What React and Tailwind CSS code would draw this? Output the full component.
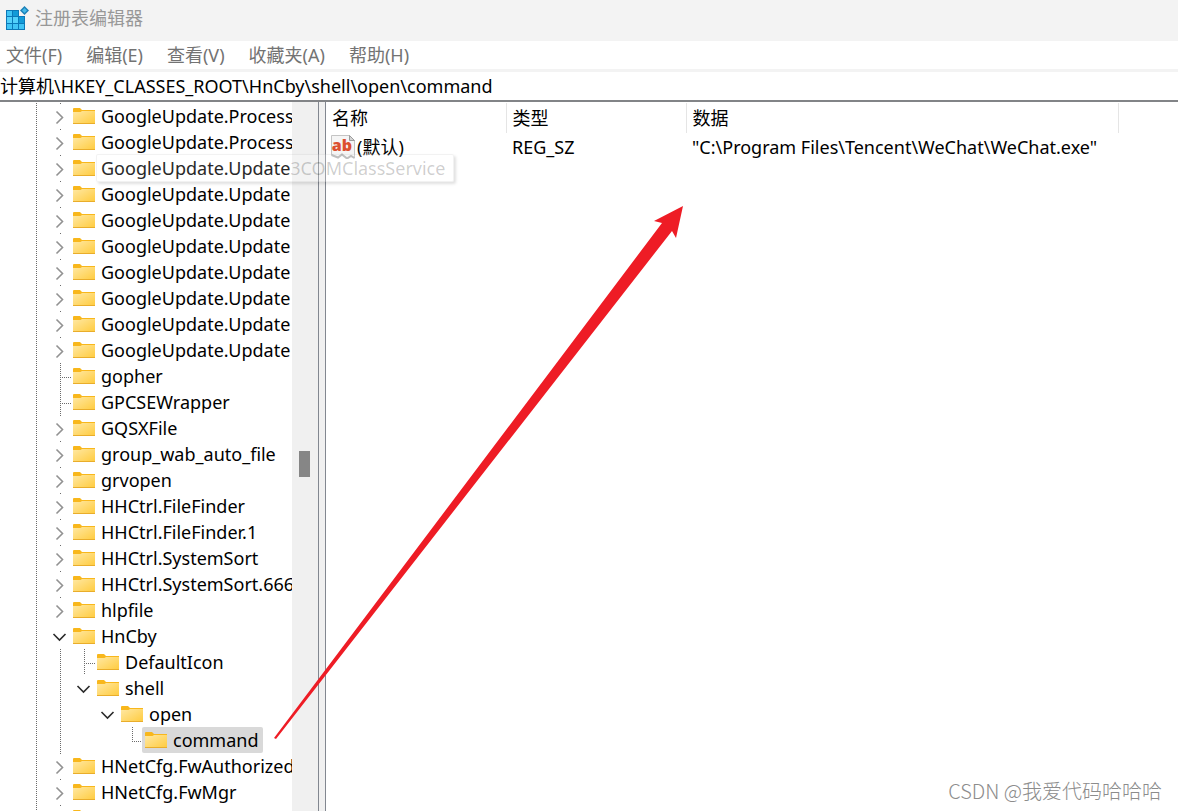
import React, { useState } from 'react';

const menus = ['文件(F)', '编辑(E)', '查看(V)', '收藏夹(A)', '帮助(H)'];

// guides: one entry per 24px indent column, left to right
const keys = [
  { name: 'GoogleUpdate.Process', guides: ['line', 'closed'] },
  { name: 'GoogleUpdate.Process', guides: ['line', 'closed'] },
  { name: 'GoogleUpdate.Update', guides: ['line', 'closed'] },
  { name: 'GoogleUpdate.Update', guides: ['line', 'closed'] },
  { name: 'GoogleUpdate.Update', guides: ['line', 'closed'] },
  { name: 'GoogleUpdate.Update', guides: ['line', 'closed'] },
  { name: 'GoogleUpdate.Update', guides: ['line', 'closed'] },
  { name: 'GoogleUpdate.Update', guides: ['line', 'closed'] },
  { name: 'GoogleUpdate.Update', guides: ['line', 'closed'] },
  { name: 'GoogleUpdate.Update', guides: ['line', 'closed'] },
  { name: 'gopher', guides: ['line', 'tee'] },
  { name: 'GPCSEWrapper', guides: ['line', 'tee'] },
  { name: 'GQSXFile', guides: ['line', 'closed'] },
  { name: 'group_wab_auto_file', guides: ['line', 'closed'] },
  { name: 'grvopen', guides: ['line', 'closed'] },
  { name: 'HHCtrl.FileFinder', guides: ['line', 'closed'] },
  { name: 'HHCtrl.FileFinder.1', guides: ['line', 'closed'] },
  { name: 'HHCtrl.SystemSort', guides: ['line', 'closed'] },
  { name: 'HHCtrl.SystemSort.666', guides: ['line', 'closed'] },
  { name: 'hlpfile', guides: ['line', 'closed'] },
  { name: 'HnCby', guides: ['line', 'open'] },
  { name: 'DefaultIcon', guides: ['line', 'line', 'tee'] },
  { name: 'shell', guides: ['line', 'line', 'open'] },
  { name: 'open', guides: ['line', 'line', 'blank', 'open'] },
  { name: 'command', guides: ['line', 'line', 'blank', 'blank', 'elbow'] },
  { name: 'HNetCfg.FwAuthorized', guides: ['line', 'closed'] },
  { name: 'HNetCfg.FwMgr', guides: ['line', 'closed'] },
  { name: '', guides: ['line', 'closed'] },
];

const Guide = ({ type }) => (
  <svg width="24" height="26" viewBox="0 0 24 26" className="shrink-0" fill="none" aria-hidden="true">
    <g stroke="#6b6b6b" strokeDasharray="1 1" shapeRendering="crispEdges">
      {(type === 'line' || type === 'tee') && <path d="M12.5 0V26" />}
      {type === 'elbow' && <path d="M12.5 0V14" />}
      {(type === 'tee' || type === 'elbow') && <path d="M12 14.5H23" />}
      {type === 'closed' && <path d="M12.5 0V1" />}
    </g>
    {type === 'closed' && <path d="M8.5 8.5L14.5 14.5L8.5 20.5" stroke="#929292" strokeWidth="1.6" />}
    {type === 'open' && <path d="M5.5 11L11.5 17L17.5 11" stroke="#2b2b2b" strokeWidth="1.6" />}
  </svg>
);

const FolderIcon = () => (
  <svg width="22" height="17" viewBox="0 0 22 17" className="shrink-0" aria-hidden="true">
    <defs>
      <linearGradient id="folder" x1="0" y1="0" x2="1" y2="1">
        <stop offset="0" stopColor="#ffe8a3" />
        <stop offset="1" stopColor="#ffcb3d" />
      </linearGradient>
    </defs>
    <path d="M0 1Q0 0 1 0H7L9 2H22V5H0Z" fill="#f8b71c" />
    <path d="M0 4H7.5L9 3H22V16H0Z" fill="url(#folder)" />
    <path d="M0 15.5H22" stroke="#e9ad2b" />
  </svg>
);

const RegeditIcon = () => (
  <svg width="24" height="24" viewBox="0 0 24 24" aria-hidden="true">
    <path d="M1 4H14V10H20V24H1Z" fill="#0b78b8" />
    <path d="M2 5H7V10H2ZM8 18H13V23H8ZM2 18H7V23H2ZM14 18H19V23H14Z" fill="#40c4f5" />
    <path d="M2 11H7V17H2ZM8 11H13V17H8Z" fill="#52d0fa" />
    <path d="M8 5H13V10H8ZM14 11H19V17H14Z" fill="#129ad8" />
    <path d="M19.5 0L24 4.5L19.5 9L15 4.5Z" fill="#1b80b8" />
    <path d="M19.5 2L22 4.5L19.5 7L17 4.5Z" fill="#45b9e8" />
  </svg>
);

const StringIcon = () => (
  <svg width="24" height="24" viewBox="0 0 24 24" className="shrink-0" aria-hidden="true">
    <path d="M.5 .5H18.5L23.5 5.5V23L20 21L16 23.5L11 19.5L7 22.5L.5 20Z" fill="#f5f5f5" stroke="#c4c4c4" />
    <path d="M18.5 .5V5.5H23.5Z" fill="#d4d4d4" stroke="#9c9c9c" />
    <path d="M.5 20L7 22.5L11 19.5L16 23.5L20 21L23.5 23" fill="none" stroke="#b0b0b0" strokeWidth="2" />
    <text x="11" y="16" textAnchor="middle" fontSize="16" fontWeight="800" fontFamily="Open Sans, sans-serif" fill="#dc5030">ab</text>
  </svg>
);

const Tree = () => {
  const [selected, setSelected] = useState(24);

  return (
    <ul className="w-[292px] shrink-0 overflow-hidden pt-px pl-6">
      {keys.map((key, i) => (
        <li key={i} className="flex h-[26px]">
          {key.guides.map((type, col) => (
            <Guide key={col} type={type} />
          ))}
          <button
            aria-label={key.name || 'HNetCfg'}
            onClick={() => setSelected(i)}
            className={`-ml-0.5 flex shrink-0 items-center gap-1.5 rounded-xs pr-[5px] pl-[3px] whitespace-nowrap ${
              i === selected ? 'bg-[#d9d9d9]' : ''
            }`}
          >
            <FolderIcon />
            <span>{key.name}</span>
          </button>
        </li>
      ))}
    </ul>
  );
};

const Values = () => (
  <div className="min-w-0 flex-1 overflow-hidden border-l border-[#828790] pt-px">
    <table className="w-full table-fixed text-left">
      <thead>
        <tr className="h-[30px]">
          <th className="w-[180px] border-r border-[#e5e5e5] pl-1.5 font-normal">名称</th>
          <th className="w-[180px] border-r border-[#e5e5e5] pl-1.5 font-normal">类型</th>
          <th className="w-[432px] border-r border-[#e5e5e5] pl-1.5 font-normal">数据</th>
          <th></th>
        </tr>
      </thead>
      <tbody>
        <tr className="h-7">
          <td className="pl-[5px]">
            <span className="flex items-center gap-0.5">
              <StringIcon />
              (默认)
            </span>
          </td>
          <td className="pl-1.5">REG_SZ</td>
          <td className="pl-1.5 whitespace-nowrap">"C:\Program Files\Tencent\WeChat\WeChat.exe"</td>
          <td></td>
        </tr>
      </tbody>
    </table>
  </div>
);

const App = () => {
  const [path, setPath] = useState('计算机\\HKEY_CLASSES_ROOT\\HnCby\\shell\\open\\command');

  return (
    <div className="relative flex h-screen flex-col overflow-hidden bg-white font-['Noto_Sans','Noto_Sans_CJK_SC',sans-serif] text-[18px] leading-6 text-black">
      <header className="flex h-[41px] shrink-0 items-center gap-1.5 bg-[#f3f3f3] pb-1.5 pl-[5px] text-[#989898]">
        <RegeditIcon />
        <h1>注册表编辑器</h1>
      </header>

      <nav className="flex h-7 shrink-0 items-center gap-6 pl-1.5 text-[#737373]">
        {menus.map((menu) => (
          <button key={menu}>{menu}</button>
        ))}
      </nav>

      <input
        aria-label="地址"
        value={path}
        onChange={(e) => setPath(e.target.value)}
        className="h-[33px] w-full shrink-0 border-t-3 border-b-2 border-t-[#f3f3f3] border-b-[#828487] pb-0.5 outline-none"
      />

      <main className="relative flex min-h-0 flex-1">
        <Tree />

        {/* Scrollbar */}
        <div className="flex w-[27px] shrink-0 justify-center border-r border-[#828790] bg-[#f0f0f0] pt-[349px] pr-0.5">
          <div className="h-[26px] w-[11px] bg-[#868686]"></div>
        </div>
        <div className="w-1.5 shrink-0 bg-[#f0f0f0]"></div>

        <Values />

        {/* Fading label tip */}
        <div className="absolute top-[52px] left-24 rounded-xs border border-black/5 bg-white/20 pr-2 pl-1 py-px whitespace-nowrap text-black/20 shadow-[2px_2px_3px_rgba(0,0,0,0.12)]">
          GoogleUpdate.Update3COMClassService
        </div>
      </main>

      <svg width="1178" height="811" viewBox="0 0 1178 811" className="pointer-events-none absolute top-0 left-0" aria-hidden="true">
        <path d="M274 738L662 223L654 221L683 206L676 238L672 231L276 739Z" fill="#ee1c25" />
      </svg>

      <p className="absolute right-4 bottom-2 font-['Noto_Sans_CJK_SC',sans-serif] text-[20px] font-light text-[#8c8c8c]">
        CSDN @我爱代码哈哈哈
      </p>
    </div>
  );
};

export default App;
